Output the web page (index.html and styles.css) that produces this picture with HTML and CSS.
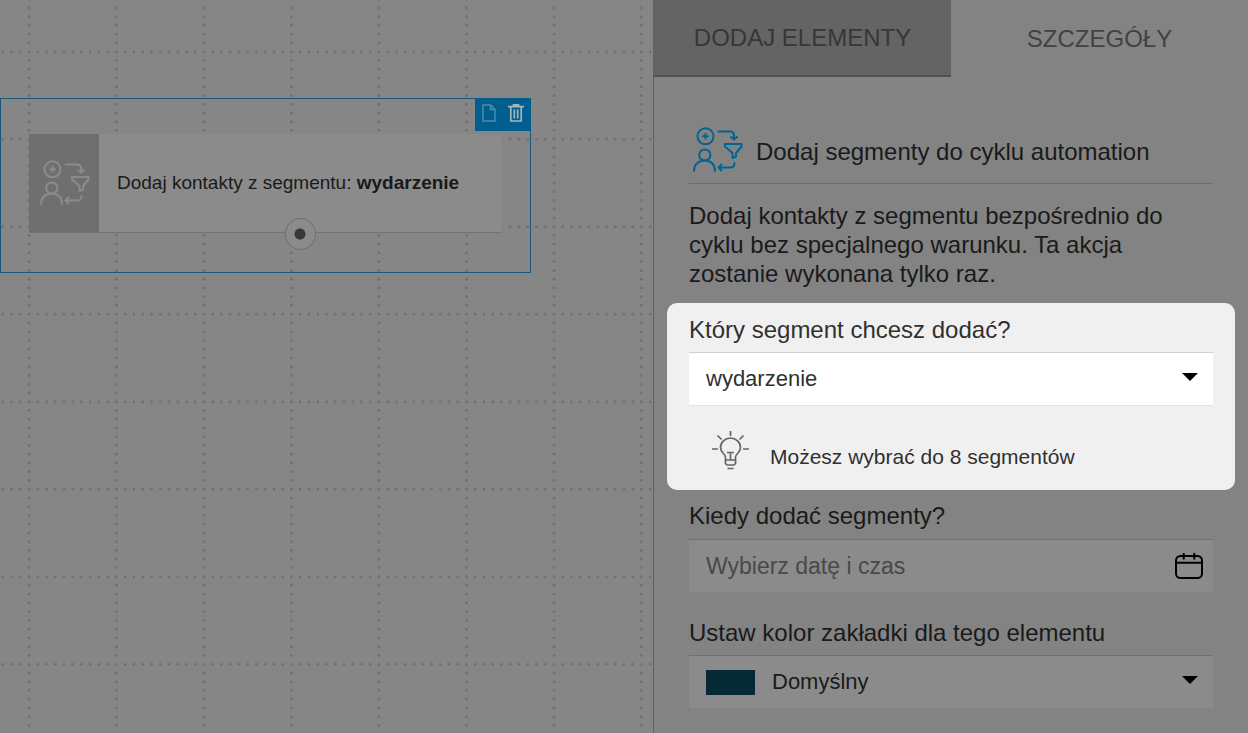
FILE: index.html
```html
<!DOCTYPE html>
<html lang="pl">
<head>
<meta charset="utf-8">
<meta name="viewport" content="width=device-width, initial-scale=1">
<title>Cykl automation</title>
<link rel="stylesheet" href="styles.css">
</head>
<body>
<svg class="defs" aria-hidden="true">
  <symbol id="segment" viewBox="0 0 50 46">
    <g fill="none" stroke="currentColor" stroke-linecap="round" stroke-linejoin="round">
      <circle cx="12.500" cy="9.300" r="8"/>
      <path d="M12.500 6.800v5M10 9.300h5"/>
      <circle cx="11.800" cy="28" r="5.600"/>
      <path d="M1 44c0-6.500 4.500-10.500 10.700-10.500S22 37.500 22 44"/>
      <path d="M25.500 4.500H37q4 0 4 4V12M38 10l3 2.500 3-2.500"/>
      <path d="M32 17h16.500v2.500L43 26v3.500l-3.500 1.500v-5L32 19.500z"/>
      <path d="M41.500 36q0 4.500-4 4.500H25.500M28.500 37.500l-3 3 3 3"/>
    </g>
  </symbol>
  <symbol id="caret" viewBox="0 0 16 8"><path d="M0 0h16L8 8z"/></symbol>
</svg>
<div class="app">
  <main class="canvas">
    <svg class="grid" aria-hidden="true">
      <pattern id="dots" width="70" height="70" patternUnits="userSpaceOnUse" patternTransform="translate(24.600 47.300) scale(1.250)">
        <g fill="none" stroke="#696969" stroke-width="2" stroke-linecap="round" stroke-dasharray="0 7">
          <path d="M3.500 3.500h69M3.500 3.500v69"/>
        </g>
      </pattern>
      <rect width="100%" height="100%" fill="url(#dots)"/>
    </svg>
    <section class="selection">
      <div class="tools">
        <button type="button" class="tool tool-copy" aria-label="Kopiuj">
          <svg width="14" height="18" viewBox="0 0 14 18"><path d="M1 1h7.500L13 5.500V17H1zM8.500 1v4.500H13" fill="none" stroke="currentColor" stroke-width="1.500"/></svg>
        </button>
        <button type="button" class="tool" aria-label="Usuń">
          <svg width="16" height="18" viewBox="0 0 16 18"><path d="M0 2.700h16M5.500 2V.8h5V2M2.800 3v14h10.400V3M6.300 5.500v9M9.700 5.500v9" fill="none" stroke="currentColor" stroke-width="1.700"/></svg>
        </button>
      </div>
      <article class="node">
        <div class="node-icon"><svg width="50" height="46"><use href="#segment"/></svg></div>
        <p class="node-text">Dodaj kontakty z segmentu: <b>wydarzenie</b></p>
        <button type="button" class="port" aria-label="Połącz"></button>
      </article>
    </section>
  </main>
  <aside class="panel">
    <nav class="tabs">
      <button type="button" class="tab tab-idle">DODAJ ELEMENTY</button>
      <button type="button" class="tab">SZCZEGÓŁY</button>
    </nav>
    <div class="details">
      <header class="heading">
        <svg class="heading-icon" width="50" height="46"><use href="#segment"/></svg>
        <h1 class="title">Dodaj segmenty do cyklu automation</h1>
      </header>
      <p class="intro">Dodaj kontakty z segmentu bezpośrednio do cyklu bez specjalnego warunku. Ta akcja zostanie wykonana tylko raz.</p>
      <section class="spotlight">
        <label class="label" for="segment-select">Który segment chcesz dodać?</label>
        <div class="field field-lit">
          <select class="control" id="segment-select"><option>wydarzenie</option></select>
          <svg class="caret" width="16" height="8"><use href="#caret"/></svg>
        </div>
        <div class="hint">
          <svg width="38" height="40" viewBox="0 0 38 40" fill="none" stroke="#666" stroke-width="1.700">
            <path d="M18.500 1v5M5.500 5.500l4 4M31.500 5.500l-4 4M0 19h6M31 19h6"/>
            <path d="M13.500 30v-3c0-3-5-4-5-9.500a10 9.500 0 0 1 20 0c0 5.500-5 6.500-5 9.500v3z"/>
            <path d="M15 22.500h7M18.500 22.500V30M13.500 30v3.500l1.500 1.500h7l1.500-1.500V30M15.500 38.500h6"/>
          </svg>
          <p class="hint-text">Możesz wybrać do 8 segmentów</p>
        </div>
      </section>
      <label class="label label-when" for="when">Kiedy dodać segmenty?</label>
      <div class="field">
        <input class="control control-date" id="when" type="text" placeholder="Wybierz datę i czas">
        <svg class="calendar" width="28" height="26" viewBox="0 0 28 26" fill="none" stroke="#000" stroke-width="2"><rect x="1" y="3" width="26" height="22" rx="4.500"/><path d="M1 9.700h26M8.700 0v6.500M19.300 0v6.500"/></svg>
      </div>
      <label class="label label-color" for="color">Ustaw kolor zakładki dla tego elementu</label>
      <div class="field">
        <select class="control control-color" id="color"><option>Domyślny</option></select>
        <span class="swatch"></span>
        <svg class="caret" width="16" height="8"><use href="#caret"/></svg>
      </div>
    </div>
  </aside>
</div>
</body>
</html>
```
FILE: styles.css
```css
* { box-sizing: border-box; }
body {
  margin: 0;
  font-family: "Liberation Sans", Arial, sans-serif;
  color: #1a1a1a;
  background: #838383;
}
p, h1 { margin: 0; font-weight: 400; }
button, input, select { font: inherit; color: inherit; border: 0; border-radius: 0; padding: 0; background: none; }
.defs { position: absolute; width: 0; height: 0; }
.app { display: grid; grid-template-columns: 653fr 595fr; min-height: 100vh; }

.canvas { position: relative; overflow: hidden; background: #868686; }
.grid { position: absolute; inset: 0; width: 100%; height: 100%; }
.selection {
  position: absolute;
  top: 98px;
  left: 0;
  border: 1px solid #1b587a;
  padding: 35px 28px 39px;
}
.tools {
  position: absolute;
  top: -1px;
  right: -1px;
  display: flex;
  align-items: center;
  justify-content: space-between;
  width: 56px;
  height: 33px;
  padding: 0 7px 3px;
  background: #005f8f;
}
.tool { display: flex; color: #a5b5be; }
.tool-copy { color: #4a8fb0; }
.tool svg { display: block; }
.node {
  position: relative;
  display: flex;
  width: 473px;
  height: 99px;
  background: #8b8b8b;
  border-bottom: 1px solid #737373;
}
.node-icon {
  display: flex;
  align-items: center;
  justify-content: center;
  width: 70px;
  padding-left: 2px;
  color: #8b8b8b;
  background: #6f6f6f;
  stroke-width: 2px;
}
.node-text { align-self: center; padding-left: 18px; font-size: 19px; line-height: 24px; }
.port {
  position: absolute;
  left: 256px;
  bottom: -18px;
  width: 31px;
  height: 32px;
  border: 1px solid #717171;
  border-radius: 50%;
  background: radial-gradient(circle at 14px 15px, #383838 5px, #8b8b8b 6px);
}

.panel { border-left: 1px solid #606060; background: #838383; }
.tabs { display: grid; grid-template-columns: 1fr 1fr; height: 77px; }
.tab { font-size: 24px; line-height: 30px; color: #424242; }
.tab-idle { color: #373737; background: #646464; border-bottom: 2px solid #515151; }
.details { padding: 48px 35px 24px; }
.heading {
  display: flex;
  align-items: center;
  gap: 13px;
  height: 59px;
  padding: 0 0 8px 4px;
  border-bottom: 1px solid #6c6c6c;
}
.heading-icon { flex: none; color: #006594; stroke-width: 2px; }
.title { padding-top: 2px; font-size: 24px; line-height: 29px; }
.intro { padding-top: 17px; font-size: 24px; line-height: 29px; }
.spotlight {
  margin: 15px -22px 11px;
  padding: 12px 22px 20px;
  border-radius: 10px;
  background: #f0f0f0;
  color: #303030;
}
.label { display: block; margin-bottom: 8px; font-size: 24px; line-height: 29px; }
.label-when { margin-bottom: 9px; }
.label-color { margin-top: 26px; }
.field {
  display: grid;
  align-items: center;
  height: 53px;
  border-top: 1px solid #717171;
  background: #8b8b8b;
}
.field > * { grid-area: 1 / 1; }
.field-lit { height: 54px; border-top-color: #d0d0d0; border-bottom: 1px solid #e4e4e4; background: #fff; }
.control { appearance: none; width: 100%; height: 100%; padding: 0 56px 0 17px; font-size: 22px; line-height: 28px; }
.control-date { font-size: 23px; }
.control::placeholder { color: #494949; opacity: 1; }
.control-color { padding-left: 83px; }
.swatch { width: 49px; height: 25px; margin-left: 17px; background: #062a35; pointer-events: none; }
.caret { justify-self: end; margin-right: 15px; margin-bottom: 4px; pointer-events: none; }
.calendar { justify-self: end; margin-right: 10px; pointer-events: none; }
.hint { display: flex; align-items: center; gap: 20px; padding: 24px 0 0 23px; }
.hint-text { padding-top: 14px; font-size: 21px; line-height: 24px; }
```
